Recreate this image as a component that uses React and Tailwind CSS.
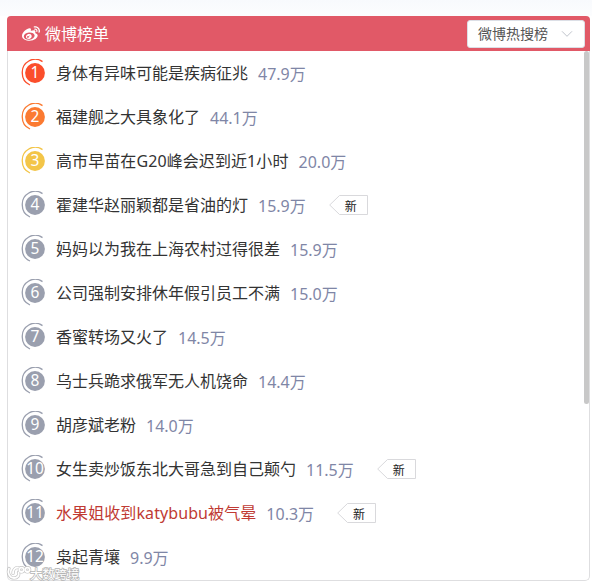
import React, { useState } from "react";
import { FaWeibo } from "react-icons/fa";

const items = [
  { title: "身体有异味可能是疾病征兆", hot: "47.9万" },
  { title: "福建舰之大具象化了", hot: "44.1万" },
  { title: "高市早苗在G20峰会迟到近1小时", hot: "20.0万", spaced: true },
  { title: "霍建华赵丽颖都是省油的灯", hot: "15.9万", isNew: true },
  { title: "妈妈以为我在上海农村过得很差", hot: "15.9万" },
  { title: "公司强制安排休年假引员工不满", hot: "15.0万" },
  { title: "香蜜转场又火了", hot: "14.5万" },
  { title: "乌士兵跪求俄军无人机饶命", hot: "14.4万" },
  { title: "胡彦斌老粉", hot: "14.0万" },
  { title: "女生卖炒饭东北大哥急到自己颠勺", hot: "11.5万", isNew: true },
  { title: "水果姐收到katybubu被气晕", hot: "10.3万", isNew: true, spaced: true, active: true },
  { title: "枭起青壤", hot: "9.9万" },
];

const rankColors = ["text-[#fb4e2b]", "text-[#fb7a31]", "text-[#f3c548]"];

function RankBadge({ rank }) {
  const color = rankColors[rank - 1] || "text-[#9a9fae]";

  return (
    <div className={`relative flex h-7 w-7 shrink-0 items-center justify-center ${color}`}>
      <svg className="absolute inset-0" width="28" height="28" viewBox="0 0 28 28" fill="none">
        <circle cx="14" cy="14" r="9.9" fill="currentColor" />
        <path d="M21.5 2.6A12.9 12.9 0 0 0 1.3 14A12.9 12.9 0 0 0 9 26" stroke="currentColor" strokeWidth="1.3" />
      </svg>
      <span className="relative pb-px text-[15.5px] leading-none text-white">{rank}</span>
    </div>
  );
}

function NewTag() {
  return (
    <div className="relative ml-[23px] h-5 w-[39px] shrink-0">
      <svg className="absolute inset-0" width="39" height="20" viewBox="0 0 39 20" fill="none">
        <path d="M10.5 0.5H38.5V19.5H10.5L0.7 10Z" stroke="#d9d9dc" />
      </svg>
      <span className="relative block pl-4 pt-px text-xs leading-[21px] text-[#222]">新</span>
    </div>
  );
}

function Watermark() {
  return (
    <svg
      className="absolute left-[6px] top-[564px]"
      width="80"
      height="20"
      viewBox="0 0 80 20"
      fill="none"
    >
      <g stroke="#c4c4c4" strokeWidth="3.2" strokeLinecap="round">
        <path d="M3 4.5C1.2 9 3.5 14 8 14c3.5 0 5.5-2.5 4.5-5.5" />
        <path d="M7 9.5C7 6 9 3.5 12 3.5" />
        <circle cx="15.5" cy="5.8" r="2.2" />
        <circle cx="21.5" cy="5.8" r="2.2" />
      </g>
      <g stroke="#fff" strokeWidth="1.8" strokeLinecap="round">
        <path d="M3 4.5C1.2 9 3.5 14 8 14c3.5 0 5.5-2.5 4.5-5.5" />
        <path d="M7 9.5C7 6 9 3.5 12 3.5" />
        <circle cx="15.5" cy="5.8" r="2.2" />
        <circle cx="21.5" cy="5.8" r="2.2" />
      </g>
      <text
        x="24"
        y="15"
        fontSize="12.3"
        fill="#fff"
        stroke="#b4b4b4"
        strokeWidth="1.5"
        paintOrder="stroke"
      >
        大数跨境
      </text>
    </svg>
  );
}

export default function App() {
  const [board] = useState("微博热搜榜");

  return (
    <div className="relative h-[587px] w-[592px] overflow-hidden bg-white pl-[7px] pt-4 font-['Noto_Sans','Noto_Sans_CJK_SC',sans-serif]">
      <div className="absolute inset-x-0 top-0 h-4 bg-linear-to-b from-[#f8fafd] to-[#fcfdfe]" />

      <div className="relative flex h-[565px] w-[583px] flex-col">
        {/* Header */}
        <div className="flex h-[35px] shrink-0 items-center justify-between rounded-t-[4px] bg-[#e15967] pl-[15px] pr-[5px]">
          <div className="flex items-center gap-[5px] text-white">
            <FaWeibo size={18} />
            <span className="text-base leading-6">{"微博榜单"}</span>
          </div>
          <button
            type="button"
            className="flex h-7 w-[118px] items-center justify-between rounded-[3px] border border-[#dcdfe6] bg-white pl-[10px] pr-[11px] text-sm text-[#555]"
          >
            {board}
            <svg width="12" height="8" viewBox="0 0 12 8" fill="none">
              <path d="M1 1.3L6 6.3L11 1.3" stroke="#c0c4cc" />
            </svg>
          </button>
        </div>

        {/* List */}
        <div className="flex min-h-0 flex-1 justify-between overflow-hidden rounded-b-[5px] border border-t-0 border-[#dedee0]">
          <ul className="flex flex-col pl-[13px]">
            {items.map((item, i) => (
              <li key={item.title} className="flex h-11 shrink-0 items-center whitespace-nowrap text-base leading-6">
                <RankBadge rank={i + 1} />
                <span
                  className={`ml-[7px] ${item.active ? "text-[#c03a33]" : "text-[#333]"} ${
                    item.spaced ? "tracking-[0.09px]" : ""
                  }`}
                >
                  {item.title}
                </span>
                <span className="ml-[10px] pt-px text-[#7f86a6]">{item.hot}</span>
                {item.isNew && <NewTag />}
              </li>
            ))}
          </ul>
          <div className="h-[353px] w-[5px] rounded-full bg-[#c8c8c8]" />
        </div>
      </div>

      <Watermark />
    </div>
  );
}
